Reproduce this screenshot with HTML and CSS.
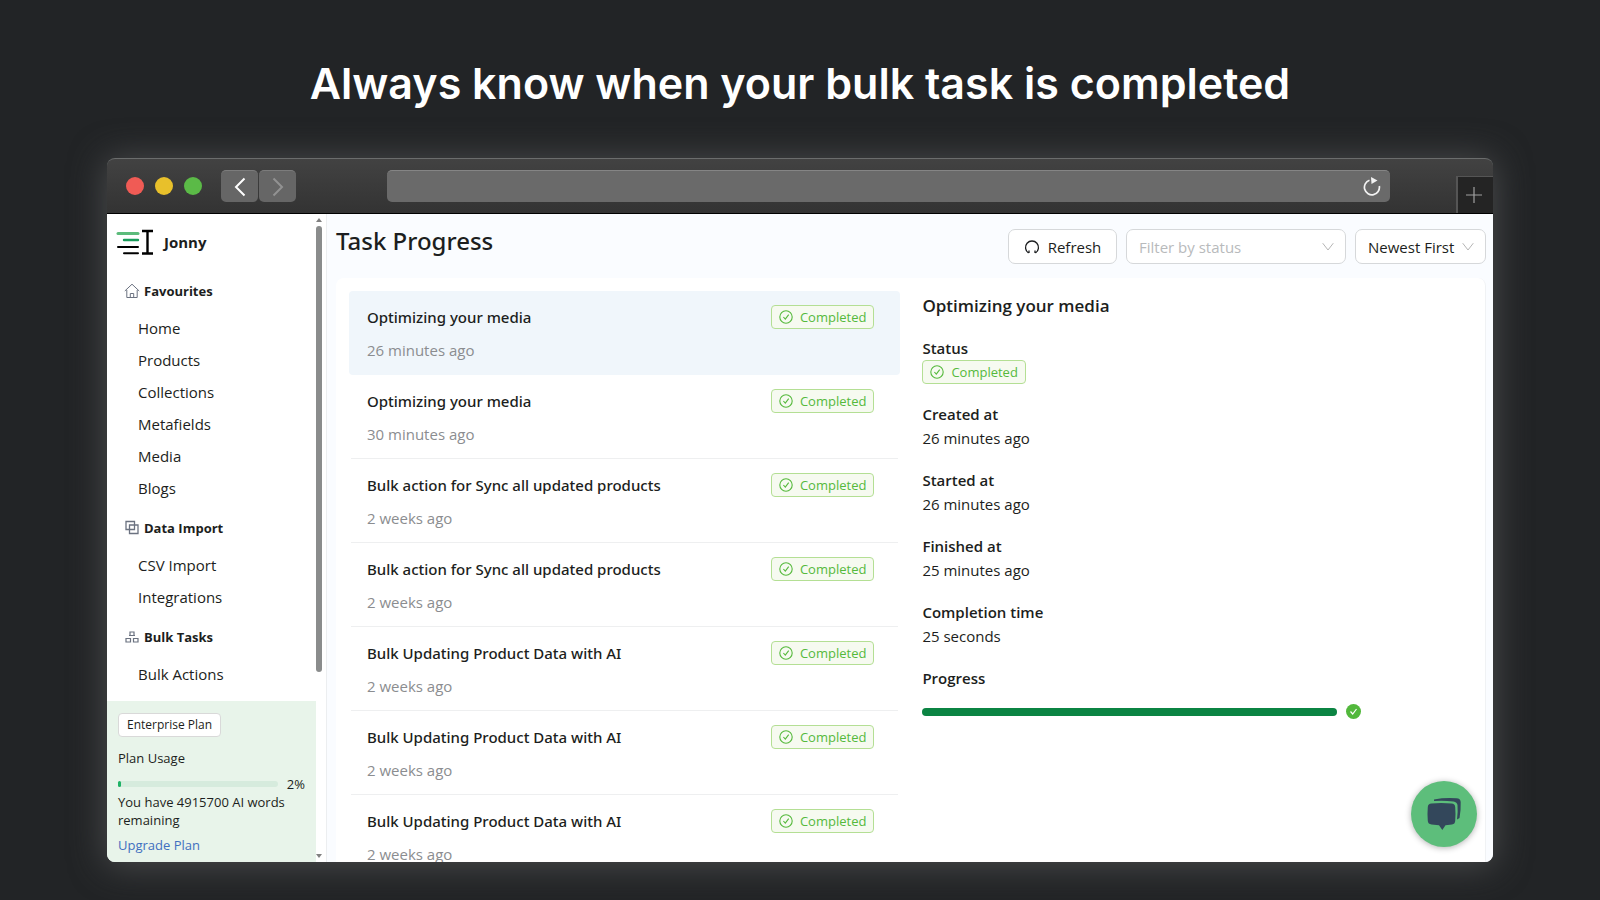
FILE: index.html
```html
<!DOCTYPE html>
<html lang="en">
  <head>
    <meta charset="utf-8">
    <title>Task Progress</title>
    <link rel="stylesheet" href="styles.css">
  </head>
  <body>
    <!-- Shared icons -->
    <svg class="sprite" width="0" height="0" aria-hidden="true">
      <symbol id="icon-check" viewBox="0 0 14 14">
        <circle cx="7" cy="7" r="6.2" fill="none" stroke="currentColor" stroke-width="1.1"/>
        <path d="M4.4 7l1.9 2.2 3.4-4.5" fill="none" stroke="currentColor" stroke-width="1.1"/>
      </symbol>
      <symbol id="icon-down" viewBox="0 0 12 12">
        <path d="M.7 2.2L6 9l5.3-6.800" fill="none" stroke="currentColor"/>
      </symbol>
    </svg>

    <h1 class="headline">Always know when your bulk task is completed</h1>

    <div class="window">
      <div class="toolbar">
        <div class="lights">
          <span class="light red"></span>
          <span class="light yellow"></span>
          <span class="light green"></span>
        </div>
        <div class="nav-buttons">
          <button class="nav-button" aria-label="Back">
            <svg width="12" height="20" viewBox="0 0 12 20"><path d="M10.500 1.500L2 10l8.500 8.500" fill="none" stroke="#fff" stroke-width="2"/></svg>
          </button>
          <button class="nav-button" aria-label="Forward">
            <svg width="12" height="20" viewBox="0 0 12 20"><path d="M1.500 1.500L10 10l-8.500 8.500" fill="none" stroke="#929292" stroke-width="2"/></svg>
          </button>
        </div>
        <div class="address">
          <svg width="18" height="20" viewBox="0 0 18 20">
            <path d="M6.500 3.200A7.500 7.500 0 1 0 16.300 9" fill="none" stroke="#f2f2f2" stroke-width="1.700"/>
            <path d="M8 0l6.500 3.500L8.500 7z" fill="#f2f2f2"/>
          </svg>
        </div>
        <button class="new-tab" aria-label="New tab">
          <svg width="16" height="16" viewBox="0 0 16 16"><path d="M8 0v16M0 8h16" stroke="#a0a0a0" stroke-width="1.200"/></svg>
        </button>
      </div>

      <div class="app">
        <aside class="sidebar">
          <div class="menu">
            <div class="brand">
              <svg width="38" height="26" viewBox="0 0 38 26">
                <g fill="none" stroke-linecap="round">
                  <path d="M2 4.500h20" stroke="#5cbb7b" stroke-width="3"/>
                  <path d="M8 11h14" stroke="#1a9c5b" stroke-width="2.400"/>
                  <path d="M2 18h20M8 24.300h14" stroke="#000" stroke-width="2"/>
                </g>
                <path d="M26 2h11M26 24.500h11M31.500 2v22" stroke="#000" stroke-width="2.400" fill="none"/>
              </svg>
              <span>Jonny</span>
            </div>

            <h3 class="menu-title">
              <svg width="16" height="16" viewBox="0 0 16 16" fill="none" stroke="currentColor"><path d="M.8 8L8 1.200 15.200 8M2.800 7v7.500h10.400V7M6.300 14v-3.500h3.400V14"/></svg>
              Favourites
            </h3>
            <nav class="menu-items">
              <a href="#">Home</a>
              <a href="#">Products</a>
              <a href="#">Collections</a>
              <a href="#">Metafields</a>
              <a href="#">Media</a>
              <a href="#">Blogs</a>
            </nav>

            <h3 class="menu-title">
              <svg width="16" height="16" viewBox="0 0 16 16" fill="none" stroke="currentColor" stroke-width="1.300"><path d="M5.500 9.500H2V1.500h8.500V5M5.500 5h8.500v8.500H5.500zM5.500 9.500h5V5"/></svg>
              Data Import
            </h3>
            <nav class="menu-items">
              <a href="#">CSV Import</a>
              <a href="#">Integrations</a>
            </nav>

            <h3 class="menu-title">
              <svg width="16" height="16" viewBox="0 0 16 16" fill="none" stroke="currentColor" stroke-width="1.200"><path d="M6 6.500V3h4v3.500M5 6.500h6M2 9.500h4.500V13H2zM9.500 9.500H14V13H9.500z"/></svg>
              Bulk Tasks
            </h3>
            <nav class="menu-items">
              <a href="#">Bulk Actions</a>
            </nav>
          </div>

          <div class="plan">
            <span class="plan-name">Enterprise Plan</span>
            <div class="plan-label">Plan Usage</div>
            <div class="usage">
              <div class="usage-track"><div class="usage-fill" style="width: 2%"></div></div>
              <span>2%</span>
            </div>
            <div class="plan-text">You have 4915700 AI words remaining</div>
            <a class="upgrade" href="#">Upgrade Plan</a>
          </div>
        </aside>

        <div class="scrollbar">
          <span class="arrow-up"></span>
          <span class="thumb"></span>
          <span class="arrow-down"></span>
        </div>

        <main class="main">
          <header class="page-header">
            <h2>Task Progress</h2>
            <div class="controls">
              <button class="refresh">
                <svg width="16" height="16" viewBox="0 0 16 16"><path d="M4.500 14A6.500 6.500 0 1 1 11.500 14M5 11.500V14M11 11.500V14" fill="none" stroke="currentColor" stroke-width="1.300"/></svg>
                Refresh
              </button>
              <div class="select-box filter">
                <select aria-label="Filter by status">
                  <option>Filter by status</option>
                  <option>Completed</option>
                </select>
                <svg width="12" height="12"><use href="#icon-down"/></svg>
              </div>
              <div class="select-box sort">
                <select aria-label="Sort order">
                  <option>Newest First</option>
                  <option>Oldest First</option>
                </select>
                <svg width="12" height="12"><use href="#icon-down"/></svg>
              </div>
            </div>
          </header>

          <div class="card">
            <ul class="tasks">
              <li class="task selected">
                <div><div class="task-name">Optimizing your media</div><div class="task-time">26 minutes ago</div></div>
                <span class="tag"><svg width="14" height="14"><use href="#icon-check"/></svg>Completed</span>
              </li>
              <li class="task">
                <div><div class="task-name">Optimizing your media</div><div class="task-time">30 minutes ago</div></div>
                <span class="tag"><svg width="14" height="14"><use href="#icon-check"/></svg>Completed</span>
              </li>
              <li class="task">
                <div><div class="task-name">Bulk action for Sync all updated products</div><div class="task-time">2 weeks ago</div></div>
                <span class="tag"><svg width="14" height="14"><use href="#icon-check"/></svg>Completed</span>
              </li>
              <li class="task">
                <div><div class="task-name">Bulk action for Sync all updated products</div><div class="task-time">2 weeks ago</div></div>
                <span class="tag"><svg width="14" height="14"><use href="#icon-check"/></svg>Completed</span>
              </li>
              <li class="task">
                <div><div class="task-name">Bulk Updating Product Data with AI</div><div class="task-time">2 weeks ago</div></div>
                <span class="tag"><svg width="14" height="14"><use href="#icon-check"/></svg>Completed</span>
              </li>
              <li class="task">
                <div><div class="task-name">Bulk Updating Product Data with AI</div><div class="task-time">2 weeks ago</div></div>
                <span class="tag"><svg width="14" height="14"><use href="#icon-check"/></svg>Completed</span>
              </li>
              <li class="task">
                <div><div class="task-name">Bulk Updating Product Data with AI</div><div class="task-time">2 weeks ago</div></div>
                <span class="tag"><svg width="14" height="14"><use href="#icon-check"/></svg>Completed</span>
              </li>
            </ul>

            <section class="details">
              <h3>Optimizing your media</h3>
              <dl>
                <dt>Status</dt>
                <dd><span class="tag"><svg width="14" height="14"><use href="#icon-check"/></svg>Completed</span></dd>
                <dt>Created at</dt>
                <dd>26 minutes ago</dd>
                <dt>Started at</dt>
                <dd>26 minutes ago</dd>
                <dt>Finished at</dt>
                <dd>25 minutes ago</dd>
                <dt>Completion time</dt>
                <dd>25 seconds</dd>
                <dt>Progress</dt>
                <dd class="progress">
                  <div class="progress-track"><div class="progress-fill" style="width: 100%"></div></div>
                  <svg width="15" height="15" viewBox="0 0 15 15"><circle cx="7.500" cy="7.500" r="7.500" fill="#52b83c"/><path d="M4.500 7.500l2.200 2.500 3.800-5" fill="none" stroke="#fff" stroke-width="1.200"/></svg>
                </dd>
              </dl>
            </section>
          </div>
        </main>
      </div>

      <button class="chat" aria-label="Open chat">
        <svg width="34" height="34" viewBox="0 0 34 34" fill="#33475b">
          <path d="M4.500 6.500Q14 5.600 24.500 6.500Q28 6.800 28.200 10Q28.800 17 28.200 24Q28 27 25 27.500L18.500 28.200L15.300 33L12 28.200L4.500 27.500Q1 27 .8 24Q.2 17 .8 10Q1 6.800 4.500 6.500Z"/>
          <path d="M7 2.500Q18 .4 29.500 1.300Q33.500 1.600 33.700 5Q34 13 32.500 21L30 22.500Q31 14 30.500 8Q30 5 26.500 4.500Q17 3.300 7 4Z"/>
        </svg>
      </button>
    </div>
  </body>
</html>
```

FILE: styles.css
```css
* {
  box-sizing: border-box;
}
body {
  margin: 0;
  height: 100vh;
  padding: 0 107px 38px;
  display: flex;
  flex-direction: column;
  background: #222426;
  font-family: "Open Sans", "Noto Sans", sans-serif;
  font-size: 15px;
  line-height: 24px;
  color: #1c1e20;
  overflow: hidden;
}
button, select {
  font: inherit;
  color: inherit;
}
a {
  color: inherit;
  text-decoration: none;
}
.sprite {
  position: absolute;
}
.headline {
  margin: 0;
  padding: 53px 0 45px;
  font-family: Inter, sans-serif;
  font-size: 43px;
  font-weight: 600;
  line-height: 60px;
  text-align: center;
  color: #fff;
}

/* Browser window */
.window {
  flex: 1;
  min-height: 0;
  position: relative;
  display: flex;
  flex-direction: column;
  border-radius: 8px;
  box-shadow: 0 2px 34px 2px #4a4b4c;
}
.toolbar {
  height: 56px;
  flex: none;
  display: flex;
  align-items: center;
  padding-left: 19px;
  background: linear-gradient(#424242, #333);
  border-top: 1px solid #6b6d6d;
  border-bottom: 1px solid #000;
  border-radius: 8px 8px 0 0;
}
.lights {
  display: flex;
  gap: 11px;
}
.light {
  width: 18px;
  height: 18px;
  border-radius: 50%;
}
.red { background: #f05b55; }
.yellow { background: #e8c02b; }
.green { background: #5bba47; }
.nav-buttons {
  display: flex;
  gap: 1px;
  margin-left: 19px;
}
.nav-button {
  width: 37px;
  height: 32px;
  padding: 0;
  display: flex;
  align-items: center;
  justify-content: center;
  background: #666;
  border: 0;
  border-top: 1px solid #7c7c7c;
  border-radius: 5px;
}
.address {
  flex: 1;
  height: 32px;
  margin: 0 66px 0 91px;
  padding-right: 9px;
  display: flex;
  align-items: center;
  justify-content: flex-end;
  background: #6a6a6a;
  border-top: 1px solid #858585;
  border-radius: 5px;
}
.new-tab {
  width: 37px;
  height: 37px;
  padding: 0 4px 0 0;
  align-self: flex-end;
  display: flex;
  align-items: center;
  justify-content: center;
  background: #242424;
  border: 0;
  border-top: 1px solid #555;
  border-left: 2px solid #555;
}
.app {
  flex: 1;
  min-height: 0;
  display: flex;
  background: #fff;
  border-radius: 0 0 8px 8px;
  overflow: hidden;
}

/* Sidebar */
.sidebar {
  width: 209px;
  flex: none;
  display: flex;
  flex-direction: column;
}
.menu {
  flex: 1;
  min-height: 0;
  overflow: hidden;
}
.brand {
  display: flex;
  align-items: center;
  gap: 10px;
  height: 53px;
  padding: 2px 0 0 9px;
  font-weight: 700;
}
.menu-title {
  display: flex;
  align-items: center;
  gap: 4px;
  height: 45px;
  margin: 0;
  padding: 2px 0 0 17px;
  font-size: 13px;
  font-weight: 700;
}
.menu-title svg {
  color: #6b7280;
}
.menu-items {
  display: flex;
  flex-direction: column;
}
.menu-items a {
  padding-left: 31px;
  line-height: 32px;
}
.plan {
  height: 161px;
  flex: none;
  padding: 12px 11px;
  background: #e8f4ea;
  font-size: 13px;
  line-height: 18px;
}
.plan-name {
  display: inline-block;
  padding: 1px 8px;
  font-size: 12px;
  line-height: 20px;
  background: #fff;
  border: 1px solid #d9d9d9;
  border-radius: 4px;
}
.plan-label {
  margin-top: 12px;
}
.usage {
  display: flex;
  align-items: center;
  gap: 9px;
  margin-top: 8px;
}
.usage-track {
  flex: 1;
  height: 6px;
  background: #d6ebdd;
  border-radius: 3px;
}
.usage-fill {
  height: 6px;
  background: #1fb266;
  border-radius: 3px;
}
.upgrade {
  display: block;
  margin-top: 7px;
  color: #3f6fc0;
}
.scrollbar {
  width: 11px;
  flex: none;
  display: flex;
  flex-direction: column;
  align-items: flex-start;
  padding: 4px 0;
  border-right: 1px solid #eceef0;
}
.thumb {
  width: 6px;
  height: 446px;
  margin-top: 4px;
  background: #8a8c8c;
  border-radius: 3px;
}
.arrow-up, .arrow-down {
  border: 3px solid transparent;
}
.arrow-up {
  border-top: 0;
  border-bottom: 4px solid #808080;
}
.arrow-down {
  margin-top: auto;
  border-bottom: 0;
  border-top: 4px solid #808080;
}

/* Task page */
.main {
  flex: 1;
  min-width: 0;
  display: flex;
  flex-direction: column;
  padding: 0 7px 0 9px;
  background: #fafcff;
}
.page-header {
  display: flex;
  justify-content: space-between;
  height: 64px;
  flex: none;
}
.page-header h2 {
  margin: 0;
  padding-top: 8px;
  font-family: "Noto Sans", "Open Sans", sans-serif;
  font-size: 24px;
  font-weight: 500;
  line-height: 38px;
}
.controls {
  display: flex;
  gap: 9px;
  padding-top: 15px;
}
.refresh, .select-box select {
  height: 35px;
  background: #fff;
  border: 1px solid #d6d8da;
  border-radius: 7px;
}
.refresh {
  width: 109px;
  padding: 0;
  display: flex;
  align-items: center;
  justify-content: center;
  gap: 8px;
}
.select-box {
  display: grid;
  align-items: center;
  height: 35px;
}
.select-box select, .select-box svg {
  grid-area: 1 / 1;
}
.select-box select {
  width: 100%;
  padding: 0 12px;
  appearance: none;
}
.select-box svg {
  justify-self: end;
  margin-right: 12px;
  color: #b5b5b5;
  pointer-events: none;
}
.filter {
  width: 220px;
}
.filter select {
  color: #b8babc;
}
.sort {
  width: 131px;
}
.card {
  flex: 1;
  min-height: 0;
  display: flex;
  gap: 22px;
  padding: 13px;
  background: #fff;
  border-right: 1px solid #f0f2f4;
  border-radius: 8px 8px 0 0;
}
.tasks {
  width: 49.1%;
  margin: 0;
  padding: 0;
  list-style: none;
}
.task {
  display: flex;
  justify-content: space-between;
  align-items: flex-start;
  height: 84px;
  margin: 0 2px;
  padding: 14px 24px 0 16px;
  border-bottom: 1px solid #eeeff0;
}
.task.selected {
  margin: 0;
  padding: 14px 26px 0 18px;
  background: #f0f6fb;
  border-bottom: 0;
  border-radius: 4px;
}
.task-name {
  font-family: "Noto Sans", "Open Sans", sans-serif;
  font-weight: 500;
}
.task-time {
  margin-top: 9px;
  color: #8b8d90;
}
.tag {
  display: inline-flex;
  align-items: center;
  gap: 7px;
  height: 24px;
  padding: 0 7px;
  font-size: 13px;
  color: #55b93c;
  background: #f6faf0;
  border: 1px solid #b4df94;
  border-radius: 4px;
}
.details {
  flex: 1;
}
.details h3 {
  margin: 3px 0 18px;
  font-size: 17px;
  font-weight: 600;
}
.details dl {
  width: 439px;
  margin: 0;
}
.details dt {
  font-weight: 600;
}
.details dd {
  margin: 0 0 18px;
}
.details dd .tag {
  display: flex;
  width: fit-content;
}
.details dd.progress {
  display: flex;
  align-items: center;
  gap: 9px;
  margin: 14px 0 0;
}
.progress-track {
  flex: 1;
  background: #eee;
  border-radius: 4px;
}
.progress-fill {
  height: 8px;
  background: #0b8443;
  border-radius: 4px;
}

/* Chat launcher floats over the page */
.chat {
  position: absolute;
  right: 16px;
  bottom: 15px;
  width: 66px;
  height: 66px;
  padding: 0;
  display: flex;
  align-items: center;
  justify-content: center;
  background: #5dbe7b;
  border: 0;
  border-radius: 50%;
  box-shadow: 0 1px 6px rgba(0, 0, 0, 0.3);
}
```
